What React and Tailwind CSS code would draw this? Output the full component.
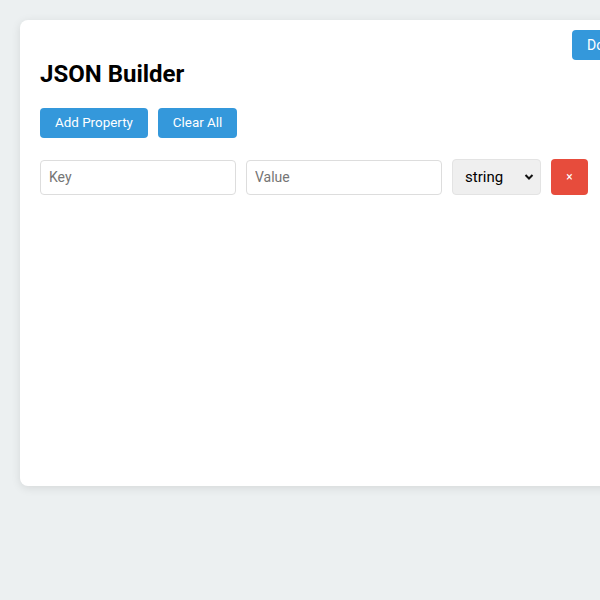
import { useState } from 'react'

const App = () => {
  const [rows, setRows] = useState([{ key: '', value: '', type: 'string' }])

  const addRow = () => setRows(prev => [...prev, { key: '', value: '', type: 'string' }])
  const clearAll = () => setRows([])
  const removeRow = (i) => setRows(prev => prev.filter((_, idx) => idx !== i))

  return (
    <div className="w-[600px] h-[600px] overflow-hidden bg-[#ecf0f1] font-['Roboto',sans-serif]">
      <div className="pt-[20px] pl-[20px]">
        <div className="relative w-[760px] h-[466px] bg-white rounded-[8px] shadow-[0_2px_10px_rgba(0,0,0,0.1)] p-[20px]">
          {/* Download button */}
          <button className="absolute top-[10px] left-[552px] h-[30px] px-[15px] bg-[#3498db] text-white text-[14px] rounded-[4px]">
            Download JSON
          </button>

          <h1 className="mt-[20px] mb-[20px] text-[24px] leading-[28px] font-bold text-black">JSON Builder</h1>

          <div className="flex gap-[10px]">
            <button onClick={addRow} className="h-[30px] px-[15px] bg-[#3498db] text-white text-[13.4px] rounded-[4px]">
              Add Property
            </button>
            <button onClick={clearAll} className="h-[30px] px-[15px] bg-[#3498db] text-white text-[13.4px] rounded-[4px]">
              Clear All
            </button>
          </div>

          <div className="mt-[21px] flex flex-col gap-[10px]">
            {rows.map((row, i) => (
              <div key={i} className="flex items-center gap-[10px]">
                <input
                  placeholder="Key"
                  className="w-[196px] h-[35px] px-[8px] border border-[#ddd] rounded-[4px] text-[14px] placeholder:text-[#757575] outline-none"
                />
                <input
                  placeholder="Value"
                  className="w-[196px] h-[35px] px-[8px] border border-[#ddd] rounded-[4px] text-[14px] placeholder:text-[#757575] outline-none"
                />
                <div className="relative w-[89px] h-[36px] bg-[#efefef] border border-[#e3e3e3] rounded-[4px] flex items-center pl-[12px] text-[15px] text-black">
                  string
                  <svg className="absolute right-[6px] top-[13px]" width="10" height="8" viewBox="0 0 10 8">
                    <path d="M1.5 2 L5 5.5 L8.5 2" stroke="#111" strokeWidth="2" fill="none" />
                  </svg>
                </div>
                <button
                  onClick={() => removeRow(i)}
                  className="w-[37px] h-[36px] bg-[#e74c3c] text-white text-[12px] rounded-[4px] flex items-center justify-center"
                >
                  ×
                </button>
              </div>
            ))}
          </div>
        </div>
      </div>
    </div>
  )
}

export default App
